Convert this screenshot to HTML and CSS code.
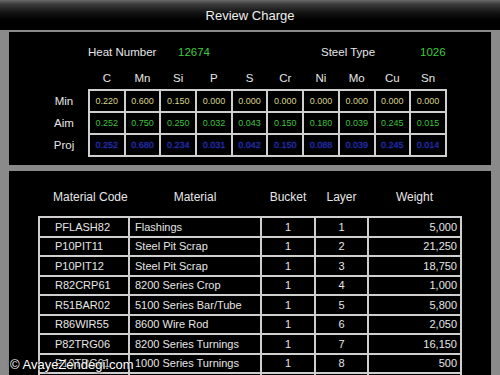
FILE: index.html
```html
<!DOCTYPE html>
<html lang="en">
<head>
  <meta charset="UTF-8">
  <meta name="viewport" content="width=device-width, initial-scale=1.0">
  <title>Review Charge</title>
  <link rel="stylesheet" href="styles.css">
</head>
<body>
  <div class="titlebar">Review Charge</div>

  <div class="content">
    <div class="panel chem-panel">
      <div class="info">
        <span class="info-label heat">Heat Number</span>
        <span class="info-value heat-value">12674</span>
        <span class="info-label steel">Steel Type</span>
        <span class="info-value">1026</span>
      </div>
      <table class="chem">
        <tr class="elements">
          <th></th>
          <th>C</th><th>Mn</th><th>Si</th><th>P</th><th>S</th>
          <th>Cr</th><th>Ni</th><th>Mo</th><th>Cu</th><th>Sn</th>
        </tr>
        <tr class="min">
          <th>Min</th>
          <td>0.220</td><td>0.600</td><td>0.150</td><td>0.000</td><td>0.000</td>
          <td>0.000</td><td>0.000</td><td>0.000</td><td>0.000</td><td>0.000</td>
        </tr>
        <tr class="aim">
          <th>Aim</th>
          <td>0.252</td><td>0.750</td><td>0.250</td><td>0.032</td><td>0.043</td>
          <td>0.150</td><td>0.180</td><td>0.039</td><td>0.245</td><td>0.015</td>
        </tr>
        <tr class="proj">
          <th>Proj</th>
          <td>0.252</td><td>0.680</td><td>0.234</td><td>0.031</td><td>0.042</td>
          <td>0.150</td><td>0.088</td><td>0.039</td><td>0.245</td><td>0.014</td>
        </tr>
      </table>
    </div>

    <div class="panel charge-panel">
      <table class="charge">
        <tr class="head">
          <th class="code">Material Code</th>
          <th>Material</th>
          <th>Bucket</th>
          <th>Layer</th>
          <th>Weight</th>
        </tr>
        <tr><td class="code">PFLASH82</td><td class="mat">Flashings</td><td>1</td><td>1</td><td class="weight">5,000</td></tr>
        <tr><td class="code">P10PIT11</td><td class="mat">Steel Pit Scrap</td><td>1</td><td>2</td><td class="weight">21,250</td></tr>
        <tr><td class="code">P10PIT12</td><td class="mat">Steel Pit Scrap</td><td>1</td><td>3</td><td class="weight">18,750</td></tr>
        <tr><td class="code">R82CRP61</td><td class="mat">8200 Series Crop</td><td>1</td><td>4</td><td class="weight">1,000</td></tr>
        <tr><td class="code">R51BAR02</td><td class="mat">5100 Series Bar/Tube</td><td>1</td><td>5</td><td class="weight">5,800</td></tr>
        <tr><td class="code">R86WIR55</td><td class="mat">8600 Wire Rod</td><td>1</td><td>6</td><td class="weight">2,050</td></tr>
        <tr><td class="code">P82TRG06</td><td class="mat">8200 Series Turnings</td><td>1</td><td>7</td><td class="weight">16,150</td></tr>
        <tr><td class="code">P10TRG01</td><td class="mat">1000 Series Turnings</td><td>1</td><td>8</td><td class="weight">500</td></tr>
        <tr class="empty"><td></td><td></td><td></td><td></td><td></td></tr>
      </table>
    </div>
  </div>

  <div class="watermark">© AvayeZendegi.com</div>
</body>
</html>
```

FILE: styles.css
```css
body {
  margin: 0;
  width: 500px;
  height: 375px;
  overflow: hidden;
  background: #8a8a8a;
  font-family: "Liberation Sans", Arial, sans-serif;
  color: #e6e6e6;
  position: relative;
}
.titlebar {
  height: 30px;
  line-height: 32px;
  text-align: center;
  font-size: 13px;
  color: #eeeeee;
  background: linear-gradient(#6a6a6a 0, #3c3c3c 4px, #121212 13px, #000 20px);
}
.content {
  padding: 2px 9px 0 9px;
}
.panel {
  background: #000;
}
.chem-panel {
  height: 133px;
  box-sizing: border-box;
  padding-top: 13px;
}
.info {
  display: flex;
  height: 14px;
  line-height: 14px;
  font-size: 11.5px;
  padding-left: 79px;
}
.info-label.heat { width: 90px; }
.heat-value { width: 143px; }
.info-label.steel { width: 99px; }
.info-value { color: #3fc93f; }

table {
  border-collapse: collapse;
  table-layout: fixed;
}
.chem {
  margin: 8px 0 0 31px;
}
.chem th, .chem td {
  padding: 0;
  text-align: center;
  font-weight: normal;
}
.chem th:first-child {
  width: 48px;
  font-size: 11.5px;
}
.elements th {
  height: 22px;
  font-size: 11.5px;
}
.chem td {
  width: 33.7px;
  height: 20px;
  font-size: 9px;
  border: 2px solid #cfcfcf;
}
.min td { color: #d8d48c; }
.aim td { color: #3ec03e; }
.proj td {
  color: #2630b0;
  text-shadow: 0 0 2px #1c24a0;
}

.charge-panel {
  margin-top: 6px;
  height: 220px;
  padding-top: 16px;
  box-sizing: border-box;
}
.charge {
  margin-left: 29px;
  font-size: 11px;
}
.charge th {
  font-weight: normal;
  font-size: 12px;
  height: 20px;
  padding: 0 0 9px 0;
  text-align: center;
}
.charge th:nth-child(1) { width: 76px; }
.charge th:nth-child(2) { width: 132px; }
.charge th:nth-child(3) { width: 54px; }
.charge th:nth-child(4) { width: 53px; }
.charge th:nth-child(5) { width: 93px; }
.charge th.code {
  text-align: left;
  padding-left: 14px;
}
.charge td {
  height: 17.5px;
  padding: 0;
  border: 2px solid #cfcfcf;
  text-align: center;
  white-space: nowrap;
  overflow: hidden;
}
.charge td.code {
  text-align: left;
  padding-left: 15px;
}
.charge td.mat {
  text-align: left;
  padding-left: 5px;
}
.charge td.weight {
  text-align: right;
  padding-right: 3px;
}

.watermark {
  position: absolute;
  left: 10px;
  top: 357px;
  font-size: 13px;
  color: #fff;
  text-shadow: 0 0 2px #000, 0 0 3px #000;
}
```
